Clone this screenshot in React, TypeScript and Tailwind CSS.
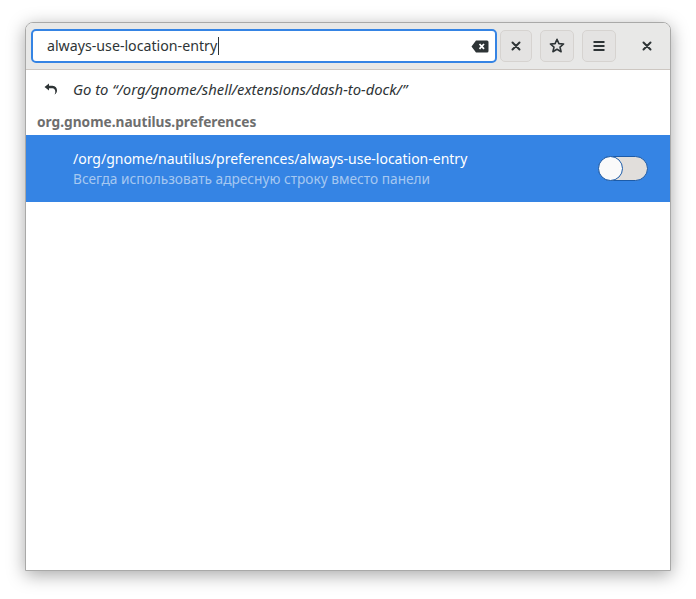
import React from "react";

function BackIcon() {
  return (
    <svg width="14" height="12" viewBox="0 0 14 12" className="text-[#2e3436]">
      <path d="M0.5 4 L5 0.5 L5 2.8 L8.5 2.8 C11.5 2.8 13 5 13 7.5 C13 9.6 11.8 11 10.5 11.5 C11.2 10.6 11.3 9.6 11.3 8.8 C11.3 6.8 10 5.3 8.5 5.3 L5 5.3 L5 7.5 Z" fill="currentColor" />
    </svg>
  );
}

function ClearIcon() {
  return (
    <svg width="18" height="13" viewBox="0 0 18 13">
      <path d="M5 0.5 H16 a1.5 1.5 0 0 1 1.5 1.5 V11 a1.5 1.5 0 0 1 -1.5 1.5 H5 L0.5 6.5 Z" fill="#2e3436" />
      <path d="M8.5 4 L13 8.8 M13 4 L8.5 8.8" stroke="#ffffff" strokeWidth="1.8" />
    </svg>
  );
}

function XIcon() {
  return (
    <svg width="10" height="10" viewBox="0 0 10 10">
      <path d="M1.5 1.5 L8.5 8.5 M8.5 1.5 L1.5 8.5" stroke="#2e3436" strokeWidth="2" strokeLinecap="round" />
    </svg>
  );
}

function StarIcon() {
  return (
    <svg width="16" height="16" viewBox="0 0 16 16">
      <path d="M8 1.3 L9.9 5.6 L14.6 6 L11 9.1 L12.1 13.7 L8 11.3 L3.9 13.7 L5 9.1 L1.4 6 L6.1 5.6 Z" fill="none" stroke="#2e3436" strokeWidth="1.6" strokeLinejoin="round" />
    </svg>
  );
}

function MenuIcon() {
  return (
    <svg width="12" height="12" viewBox="0 0 12 12">
      <rect x="0.5" y="1" width="11" height="2" fill="#2e3436" />
      <rect x="0.5" y="5" width="11" height="2" fill="#2e3436" />
      <rect x="0.5" y="9" width="11" height="2" fill="#2e3436" />
    </svg>
  );
}

export default function App() {
  return (
    <div
      className="w-[696px] h-[599px] bg-white pt-[22px] pl-[25px]"
      style={{ fontFamily: '"Noto Sans", "Open Sans", sans-serif' }}
    >
      <div className="w-[646px] h-[549px] flex flex-col bg-white border border-[#a9a9a8] rounded-t-[8px] shadow-[0_4px_18px_rgba(0,0,0,0.35)] overflow-hidden">
        <div className="h-[47px] shrink-0 bg-[#e8e8e7] border-b border-[#cdc7c2] flex items-center pl-[5px]">
          <div className="w-[466px] h-[34px] border-2 border-[#3584e4] rounded-[5px] bg-white flex items-center pl-[14px] pr-[6px]">
            <span className="text-[14.2px] text-[#2e3436] leading-none">always-use-location-entry</span>
            <span className="w-px h-[18px] bg-[#2e3436] ml-[1px]" />
            <span className="flex-1" />
            <ClearIcon />
          </div>
          <button className="ml-[3px] w-[32px] h-[32px] rounded-[5px] bg-[#e4e3e2] border border-[#d6d3d0] flex items-center justify-center">
            <XIcon />
          </button>
          <button className="ml-[8px] w-[34px] h-[32px] rounded-[5px] bg-[#e4e3e2] border border-[#d6d3d0] flex items-center justify-center">
            <StarIcon />
          </button>
          <button className="ml-[8px] w-[34px] h-[32px] rounded-[5px] bg-[#e4e3e2] border border-[#d6d3d0] flex items-center justify-center">
            <MenuIcon />
          </button>
          <div className="flex-1 flex items-center justify-center pl-[8px]">
            <XIcon />
          </div>
        </div>
        <div className="flex-1 flex flex-col">
          <div className="h-[36px] mt-[1px] flex items-center">
            <div className="w-[47px] flex justify-end pr-[15px] pl-[17px]">
              <BackIcon />
            </div>
            <span className="text-[14.8px] italic text-[#2e3436]">Go to “/org/gnome/shell/extensions/dash-to-dock/”</span>
          </div>
          <div className="h-[28px] flex items-center pl-[11px] pt-[2px]">
            <span className="text-[13.7px] font-bold text-[#6e6e6e]">org.gnome.nautilus.preferences</span>
          </div>
          <div className="h-[67px] bg-[#3584e4] flex items-center pl-[47px] pr-[22px]">
            <div className="flex-1 flex flex-col">
              <span className="text-[14px] text-white leading-[20px]">/org/gnome/nautilus/preferences/always-use-location-entry</span>
              <span className="text-[13.7px] text-[#a6c8f1] leading-[20px]">Всегда использовать адресную строку вместо панели</span>
            </div>
            <div className="w-[50px] h-[25px] rounded-full bg-[#e1dedb] border border-[#1c5ba8] relative">
              <div className="absolute left-[-1px] top-[-1px] w-[25px] h-[25px] rounded-full bg-[#fafafa] border border-[#1c5ba8]" />
            </div>
          </div>
        </div>
      </div>
    </div>
  );
}
